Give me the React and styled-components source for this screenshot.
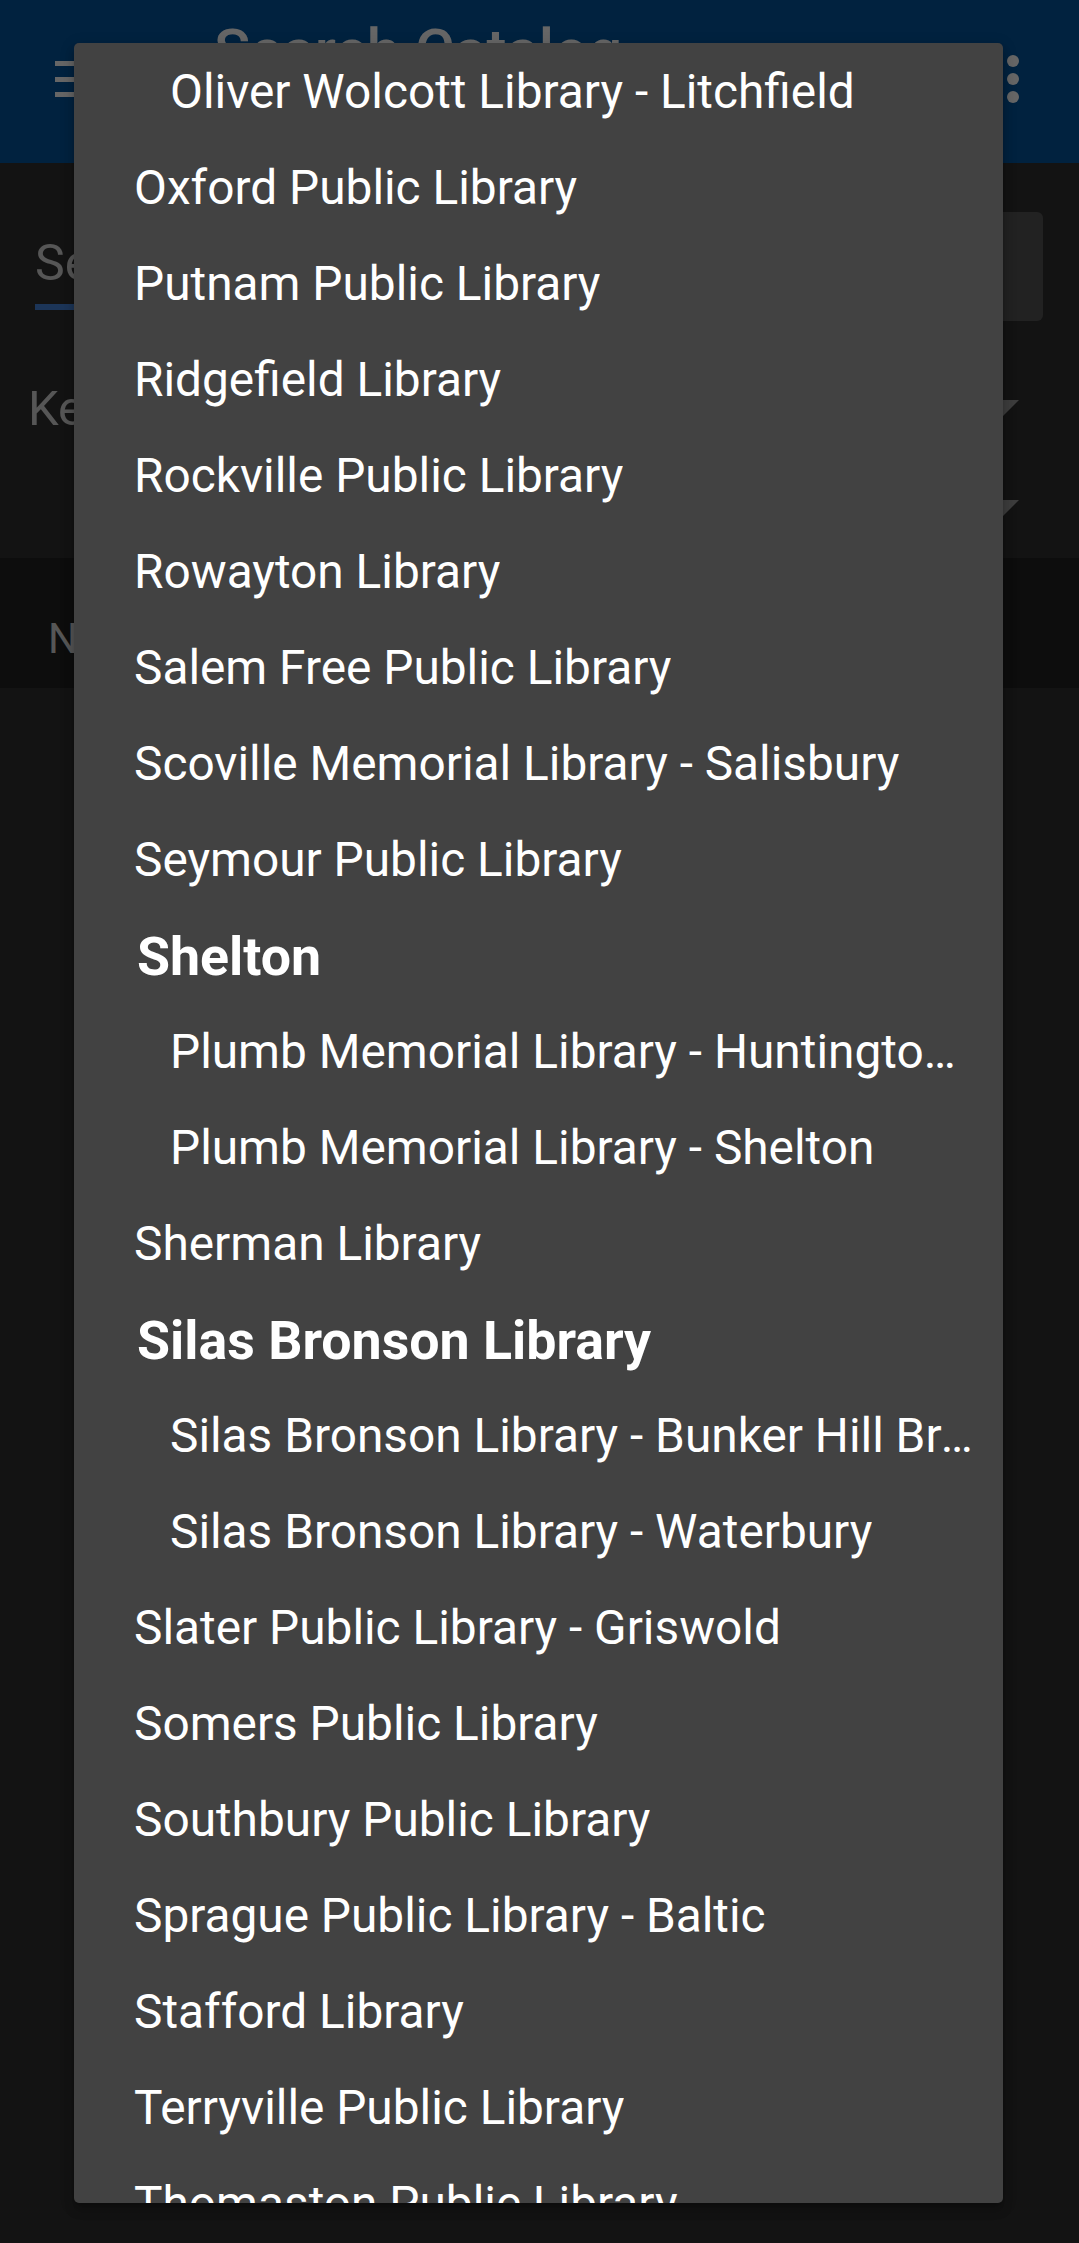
import React from "react";
import styled, { createGlobalStyle } from "styled-components";

const GlobalStyle = createGlobalStyle`
  html, body {
    margin: 0;
    padding: 0;
    background: #303030;
  }
  body {
    font-family: Roboto, "Noto Sans", "Liberation Sans", sans-serif;
    -webkit-font-smoothing: antialiased;
  }
`;

const Screen = styled.div`
  position: relative;
  width: 1079px;
  height: 2243px;
  overflow: hidden;
  background: #303030;
`;

/* ---------- app bar ---------- */

const AppBar = styled.header`
  display: flex;
  align-items: center;
  height: 163px;
  padding: 0 60px 0 55px;
  box-sizing: border-box;
  background: #03559d;
  color: #fff;
`;

const NavButton = styled.div`
  display: flex;
  flex-direction: column;
  justify-content: space-between;
  width: 50px;
  height: 36px;
  margin-top: -5px;
`;

const NavBar = styled.span`
  display: block;
  height: 5px;
  background: #fff;
`;

const Title = styled.h1`
  align-self: flex-start;
  margin: 15px 0 0 109px;
  font-size: 60px;
  font-weight: 500;
  line-height: normal;
  white-space: nowrap;
`;

const Overflow = styled.div`
  display: flex;
  flex-direction: column;
  gap: 6px;
  margin-left: auto;
  margin-top: -5px;
`;

const Dot = styled.span`
  width: 12px;
  height: 12px;
  border-radius: 50%;
  background: #fff;
`;

/* ---------- search form ---------- */

const SearchRow = styled.div`
  display: flex;
  align-items: flex-start;
  gap: 24px;
  padding: 49px 36px 0 35px;
`;

const Field = styled.div`
  flex: 1;
  height: 98px;
  box-sizing: border-box;
  padding-top: 22px;
  border-bottom: 6px solid #4684dc;
  font-size: 50px;
  line-height: normal;
  color: #d6d6d6;
`;

const SearchButton = styled.div`
  width: 110px;
  height: 109px;
  border-radius: 6px;
  background: #565656;
`;

const Spinners = styled.div`
  margin-top: 37px;
`;

const SpinnerRow = styled.div`
  display: flex;
  align-items: center;
  justify-content: space-between;
  height: 100px;
  padding: 0 60px 0 28px;
  font-size: 49px;
  line-height: normal;
  color: #d6d6d6;
`;

const Band = styled.div`
  height: 130px;
  box-sizing: border-box;
  padding: 56px 0 0 48px;
  background: #212121;
  font-size: 42px;
  line-height: normal;
  color: #d6d6d6;
`;

const Arrow = () => (
  <svg width="32" height="16" viewBox="0 0 32 16">
    <path d="M0 0H32L16 16Z" fill="#9a9a9a" />
  </svg>
);

/* ---------- popup list ---------- */

const Scrim = styled.div`
  position: absolute;
  inset: 0;
  background: rgba(0, 0, 0, 0.6);
`;

const Popup = styled.ul`
  position: absolute;
  left: 74px;
  top: 43px;
  width: 929px;
  height: 2160px;
  margin: 0;
  padding: 0;
  list-style: none;
  overflow: hidden;
  border-radius: 5px;
  background: #424242;
  box-shadow: 0 8px 10px 1px rgba(0, 0, 0, 0.14), 0 3px 14px 2px rgba(0, 0, 0, 0.12),
    0 5px 5px -3px rgba(0, 0, 0, 0.2);
`;

const indent = { group: 63, child: 96, item: 60 };

const Option = styled.li`
  display: flex;
  align-items: center;
  height: 96px;
  padding: 2px 25px 0 ${({ $kind }) => indent[$kind]}px;
  box-sizing: border-box;
  color: #fff;
  font-size: ${({ $kind }) => ($kind === "group" ? 53.7 : 47.8)}px;
  font-weight: ${({ $kind }) => ($kind === "group" ? 700 : 400)};
  line-height: normal;
`;

const OptionText = styled.span`
  display: block;
  min-width: 0;
  overflow: hidden;
  white-space: nowrap;
  text-overflow: ellipsis;
`;

const libraries = [
  ["Oliver Wolcott Library - Litchfield", "child"],
  ["Oxford Public Library"],
  ["Putnam Public Library"],
  ["Ridgefield Library"],
  ["Rockville Public Library"],
  ["Rowayton Library"],
  ["Salem Free Public Library"],
  ["Scoville Memorial Library - Salisbury"],
  ["Seymour Public Library"],
  ["Shelton", "group"],
  ["Plumb Memorial Library - Huntington Branch", "child"],
  ["Plumb Memorial Library - Shelton", "child"],
  ["Sherman Library"],
  ["Silas Bronson Library", "group"],
  ["Silas Bronson Library - Bunker Hill Branch", "child"],
  ["Silas Bronson Library - Waterbury", "child"],
  ["Slater Public Library - Griswold"],
  ["Somers Public Library"],
  ["Southbury Public Library"],
  ["Sprague Public Library - Baltic"],
  ["Stafford Library"],
  ["Terryville Public Library"],
  ["Thomaston Public Library"],
];

export default function App() {
  return (
    <>
      <GlobalStyle />
      <Screen>
        <AppBar>
          <NavButton>
            <NavBar />
            <NavBar />
            <NavBar />
          </NavButton>
          <Title>Search Catalog</Title>
          <Overflow>
            <Dot />
            <Dot />
            <Dot />
          </Overflow>
        </AppBar>

        <SearchRow>
          <Field>Search</Field>
          <SearchButton />
        </SearchRow>

        <Spinners>
          <SpinnerRow>
            <span>Keyword</span>
            <Arrow />
          </SpinnerRow>
          <SpinnerRow>
            <span />
            <Arrow />
          </SpinnerRow>
        </Spinners>

        <Band>New Search</Band>

        <Scrim />

        <Popup>
          {libraries.map(([name, kind = "item"]) => (
            <Option key={name} $kind={kind}>
              <OptionText>{name}</OptionText>
            </Option>
          ))}
        </Popup>
      </Screen>
    </>
  );
}
